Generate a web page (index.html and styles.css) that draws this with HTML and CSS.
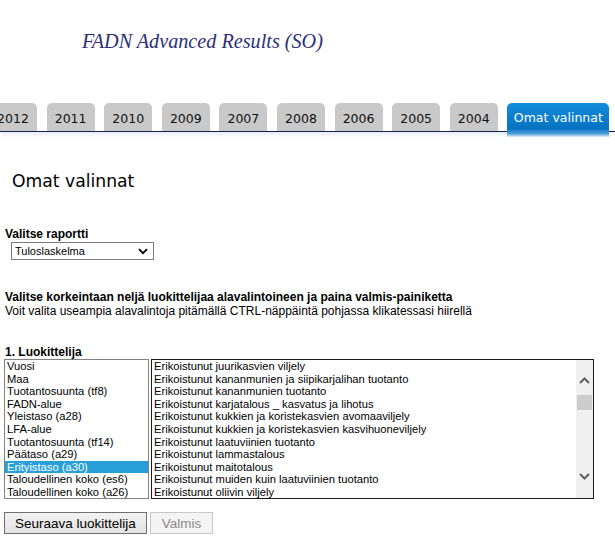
FILE: index.html
```html
<!DOCTYPE html>
<html>
<head>
<meta charset="utf-8">
<link rel="stylesheet" href="styles.css">
</head>
<body>
<div class="header">
  <div class="site-title">FADN Advanced Results (SO)</div>
</div>
<nav class="tabbar">
  <div class="tabs">
    <span class="tab">2012</span>
    <span class="tab">2011</span>
    <span class="tab">2010</span>
    <span class="tab">2009</span>
    <span class="tab">2007</span>
    <span class="tab">2008</span>
    <span class="tab">2006</span>
    <span class="tab">2005</span>
    <span class="tab">2004</span>
    <span class="tab active">Omat valinnat</span>
  </div>
</nav>
<main class="content">
  <h1 class="page-title">Omat valinnat</h1>

  <div class="label">Valitse raportti</div>
  <div class="select">
    <span>Tuloslaskelma</span>
    <svg class="chev" width="10" height="7" viewBox="0 0 10 7"><path d="M1 1.2 L5 5.2 L9 1.2" fill="none" stroke="#000" stroke-width="1.8"/></svg>
  </div>

  <div class="instructions">
    <div class="label">Valitse korkeintaan neljä luokittelijaa alavalintoineen ja paina valmis-painiketta</div>
    <div class="note">Voit valita useampia alavalintoja pitämällä CTRL-näppäintä pohjassa klikatessasi hiirellä</div>
  </div>

  <div class="label">1. Luokittelija</div>
  <div class="lists">
    <div class="listbox left">
      <div class="opt">Vuosi</div>
      <div class="opt">Maa</div>
      <div class="opt">Tuotantosuunta (tf8)</div>
      <div class="opt">FADN-alue</div>
      <div class="opt">Yleistaso (a28)</div>
      <div class="opt">LFA-alue</div>
      <div class="opt">Tuotantosuunta (tf14)</div>
      <div class="opt">Päätaso (a29)</div>
      <div class="opt selected">Erityistaso (a30)</div>
      <div class="opt">Taloudellinen koko (es6)</div>
      <div class="opt">Taloudellinen koko (a26)</div>
    </div>
    <div class="listbox right">
      <div class="items">
        <div class="opt">Erikoistunut juurikasvien viljely</div>
        <div class="opt">Erikoistunut kananmunien ja siipikarjalihan tuotanto</div>
        <div class="opt">Erikoistunut kananmunien tuotanto</div>
        <div class="opt">Erikoistunut karjatalous _ kasvatus ja lihotus</div>
        <div class="opt">Erikoistunut kukkien ja koristekasvien avomaaviljely</div>
        <div class="opt">Erikoistunut kukkien ja koristekasvien kasvihuoneviljely</div>
        <div class="opt">Erikoistunut laatuviinien tuotanto</div>
        <div class="opt">Erikoistunut lammastalous</div>
        <div class="opt">Erikoistunut maitotalous</div>
        <div class="opt">Erikoistunut muiden kuin laatuviinien tuotanto</div>
        <div class="opt">Erikoistunut oliivin viljely</div>
      </div>
      <div class="scrollbar">
        <svg class="arrow" width="17" height="14" viewBox="0 0 17 14"><path d="M4 9 L8.5 4.5 L13 9" fill="none" stroke="#606060" stroke-width="2"/></svg>
        <div class="track"><div class="thumb"></div></div>
        <svg class="arrow" width="17" height="14" viewBox="0 0 17 14"><path d="M4 5 L8.5 9.5 L13 5" fill="none" stroke="#606060" stroke-width="2"/></svg>
      </div>
    </div>
  </div>

  <div class="buttons">
    <button class="btn">Seuraava luokittelija</button>
    <button class="btn" disabled>Valmis</button>
  </div>
</main>
</body>
</html>
```
FILE: styles.css
```css
html, body {
  margin: 0;
  padding: 0;
  background: #fff;
  font-family: "Liberation Sans", Arial, sans-serif;
  color: #000;
  overflow: hidden;
}

.header {
  height: 103px;
  padding-left: 82px;
  box-sizing: border-box;
  padding-top: 28px;
}

.site-title {
  font-family: "Liberation Serif", "Times New Roman", serif;
  font-style: italic;
  font-size: 20.2px;
  color: #2e2e78;
  line-height: 26px;
}

.tabbar {
  border-bottom: 1px solid #1c1c4c;
  height: 28px;
  box-shadow: 0 4px 4px -1px #e6effa;
  position: relative;
}

.tabs {
  display: flex;
  gap: 9.6px;
  margin-left: -11px;
  height: 28px;
}

.tab {
  width: 48px;
  height: 28px;
  flex: none;
  background: #c9c9c9;
  border-radius: 5px 5px 0 0;
  font-family: "DejaVu Sans", Verdana, sans-serif;
  font-size: 12.5px;
  display: flex;
  align-items: center;
  justify-content: center;
  padding-top: 3px;
  box-sizing: border-box;
  color: #111;
}

.tab.active {
  width: 102px;
  height: 34px;
  background: linear-gradient(#128ddb, #0572c2 75%, #4e9fd8 90%, #e8f1fb);
  color: #fff;
  position: relative;
  z-index: 1;
  padding-top: 0;
  padding-bottom: 6px;
  align-items: center;
}

.content {
  padding: 0 5px;
}

.page-title {
  font-family: "DejaVu Sans", Verdana, sans-serif;
  font-weight: normal;
  font-size: 17.2px;
  margin: 38px 0 0 7px;
  line-height: 22px;
}

.label {
  font-weight: bold;
  font-size: 12px;
  line-height: 14px;
}

.page-title + .label {
  margin-top: 35px;
}

.select {
  width: 143px;
  height: 18px;
  box-sizing: border-box;
  border: 1px solid #7a7a7a;
  margin: 1px 0 0 6px;
  display: flex;
  align-items: center;
  justify-content: space-between;
  padding: 0 5px 0 3px;
  font-size: 11px;
}

.instructions {
  margin-top: 30px;
}

.note {
  font-size: 12px;
  line-height: 14px;
}

.instructions + .label {
  margin-top: 27px;
}

.lists {
  display: flex;
  gap: 2px;
  margin-top: 0;
  margin-left: -1px;
}

.listbox {
  height: 140px;
  box-sizing: border-box;
  font-size: 11.2px;
  line-height: 12.6px;
  padding-top: 0;
  overflow: hidden;
}

.listbox.left {
  width: 145px;
  border: 1px solid #828282;
}

.listbox.right {
  width: 443px;
  border: 1px solid #1a1a1a;
  display: flex;
  padding-top: 0;
}

.listbox.right .items {
  flex: 1;
}

.opt {
  padding-left: 2px;
  white-space: nowrap;
  height: 12.6px;
}

.opt.selected {
  background: #299fd9;
  color: #fff;
}

.scrollbar {
  width: 17px;
  background: #f0f0f0;
  display: flex;
  flex-direction: column;
  padding: 14px 0 15px;
  box-sizing: border-box;
}

.arrow {
  display: block;
  flex: none;
}

.track {
  flex: 1;
  padding-top: 7px;
}

.thumb {
  height: 15px;
  background: #cdcdcd;
  margin: 0 1px 0 1px;
}

.buttons {
  display: flex;
  gap: 3px;
  margin-top: 13px;
  margin-left: -1px;
}

.btn {
  font-family: "Liberation Sans", Arial, sans-serif;
  font-size: 13.5px;
  height: 22px;
  padding: 0 10px;
  border: 1px solid #707070;
  background: linear-gradient(#f2f2f2, #e3e3e3);
  color: #000;
  border-radius: 0;
}

.btn:disabled {
  border-color: #c8c8c8;
  background: #f4f4f4;
  color: #8a8a8a;
  padding: 0 11px;
}
```
